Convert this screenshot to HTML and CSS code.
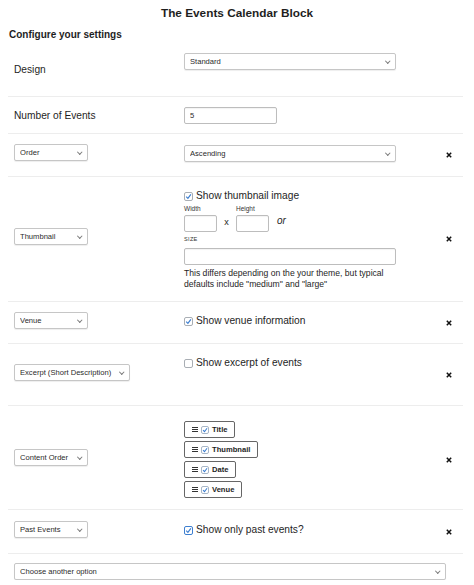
FILE: index.html
```html
<!DOCTYPE html>
<html lang="en">

<head>
    <meta charset="UTF-8">
    <meta name="viewport" content="width=device-width, initial-scale=1.0">
    <title>The Events Calendar Block</title>
    <link rel="stylesheet" href="styles.css">
</head>

<body>
    <div class="block">
        <h1>The Events Calendar Block</h1>
        <h2>Configure your settings</h2>

        <!-- Design -->
        <div class="row row-design">
            <div class="label">Design</div>
            <div class="field">
                <div class="select select-wide">
                    <select>
                        <option>Standard</option>
                    </select>
                </div>
            </div>
            <div></div>
        </div>

        <!-- Number of events -->
        <div class="row row-number">
            <div class="label">Number of Events</div>
            <div class="field">
                <input class="text-input input-number" type="text" value="5">
            </div>
            <div></div>
        </div>

        <!-- Order -->
        <div class="row row-order">
            <div class="label">
                <div class="select">
                    <select>
                        <option>Order</option>
                    </select>
                </div>
            </div>
            <div class="field">
                <div class="select select-wide">
                    <select>
                        <option>Ascending</option>
                    </select>
                </div>
            </div>
            <button class="remove" type="button">
                <svg viewBox="0 0 6 6"><path d="M0.8 0.8 L5.2 5.2 M5.2 0.8 L0.8 5.2" /></svg>
            </button>
        </div>

        <!-- Thumbnail -->
        <div class="row">
            <div class="label">
                <div class="select">
                    <select>
                        <option>Thumbnail</option>
                    </select>
                </div>
            </div>
            <div class="field">
                <label class="check">
                    <span class="box">
                        <svg viewBox="0 0 7 7"><path d="M1.2 3.7 L2.9 5.4 L5.9 1.4" /></svg>
                    </span>
                    Show thumbnail image
                </label>
                <div class="dims">
                    <div class="dim">
                        <span>Width</span>
                        <input class="text-input input-dim" type="text">
                    </div>
                    <span class="times">x</span>
                    <div class="dim">
                        <span>Height</span>
                        <input class="text-input input-dim" type="text">
                    </div>
                    <span class="or">or</span>
                </div>
                <div class="size-label">Size</div>
                <input class="text-input input-size" type="text">
                <p class="help">This differs depending on the your theme, but typical defaults include "medium" and "large"</p>
            </div>
            <button class="remove" type="button">
                <svg viewBox="0 0 6 6"><path d="M0.8 0.8 L5.2 5.2 M5.2 0.8 L0.8 5.2" /></svg>
            </button>
        </div>

        <!-- Venue -->
        <div class="row">
            <div class="label">
                <div class="select">
                    <select>
                        <option>Venue</option>
                    </select>
                </div>
            </div>
            <div class="field">
                <label class="check">
                    <span class="box">
                        <svg viewBox="0 0 7 7"><path d="M1.2 3.7 L2.9 5.4 L5.9 1.4" /></svg>
                    </span>
                    Show venue information
                </label>
            </div>
            <button class="remove" type="button">
                <svg viewBox="0 0 6 6"><path d="M0.8 0.8 L5.2 5.2 M5.2 0.8 L0.8 5.2" /></svg>
            </button>
        </div>

        <!-- Excerpt -->
        <div class="row row-tall">
            <div class="label">
                <div class="select">
                    <select>
                        <option>Excerpt (Short Description)</option>
                    </select>
                </div>
            </div>
            <div class="field">
                <label class="check">
                    <span class="box"></span>
                    Show excerpt of events
                </label>
            </div>
            <button class="remove" type="button">
                <svg viewBox="0 0 6 6"><path d="M0.8 0.8 L5.2 5.2 M5.2 0.8 L0.8 5.2" /></svg>
            </button>
        </div>

        <!-- Content order (draggable list) -->
        <div class="row row-list">
            <div class="label">
                <div class="select">
                    <select>
                        <option>Content Order</option>
                    </select>
                </div>
            </div>
            <div class="field">
                <div class="order-list">
                    <div class="order-item">
                        <svg class="grip" viewBox="0 0 6 5"><path d="M0 0.5 H6 M0 2.5 H6 M0 4.5 H6" /></svg>
                        <span class="box box-small">
                            <svg viewBox="0 0 7 7"><path d="M1.2 3.7 L2.9 5.4 L5.9 1.4" /></svg>
                        </span>
                        Title
                    </div>
                    <div class="order-item">
                        <svg class="grip" viewBox="0 0 6 5"><path d="M0 0.5 H6 M0 2.5 H6 M0 4.5 H6" /></svg>
                        <span class="box box-small">
                            <svg viewBox="0 0 7 7"><path d="M1.2 3.7 L2.9 5.4 L5.9 1.4" /></svg>
                        </span>
                        Thumbnail
                    </div>
                    <div class="order-item">
                        <svg class="grip" viewBox="0 0 6 5"><path d="M0 0.5 H6 M0 2.5 H6 M0 4.5 H6" /></svg>
                        <span class="box box-small">
                            <svg viewBox="0 0 7 7"><path d="M1.2 3.7 L2.9 5.4 L5.9 1.4" /></svg>
                        </span>
                        Date
                    </div>
                    <div class="order-item">
                        <svg class="grip" viewBox="0 0 6 5"><path d="M0 0.5 H6 M0 2.5 H6 M0 4.5 H6" /></svg>
                        <span class="box box-small">
                            <svg viewBox="0 0 7 7"><path d="M1.2 3.7 L2.9 5.4 L5.9 1.4" /></svg>
                        </span>
                        Venue
                    </div>
                </div>
            </div>
            <button class="remove" type="button">
                <svg viewBox="0 0 6 6"><path d="M0.8 0.8 L5.2 5.2 M5.2 0.8 L0.8 5.2" /></svg>
            </button>
        </div>

        <!-- Past events -->
        <div class="row row-past">
            <div class="label">
                <div class="select">
                    <select>
                        <option>Past Events</option>
                    </select>
                </div>
            </div>
            <div class="field">
                <label class="check">
                    <span class="box box-focus">
                        <svg viewBox="0 0 7 7"><path d="M1.2 3.7 L2.9 5.4 L5.9 1.4" /></svg>
                    </span>
                    Show only past events?
                </label>
            </div>
            <button class="remove" type="button">
                <svg viewBox="0 0 6 6"><path d="M0.8 0.8 L5.2 5.2 M5.2 0.8 L0.8 5.2" /></svg>
            </button>
        </div>

        <!-- Add another setting -->
        <div class="add-row">
            <div class="select select-full">
                <select>
                    <option>Choose another option</option>
                </select>
            </div>
        </div>
    </div>
</body>

</html>
```

FILE: styles.css
```css
body {
    margin: 0;
    font-family: 'Liberation Sans', Arial, sans-serif;
    color: #1e1e1e;
    background: #fff;
}

.block {
    padding: 6px 11px 0 8px;
}

.block h1 {
    margin: 0 -3px 0 0;
    font-size: 11.8px;
    line-height: 14px;
    text-align: center;
}

.block h2 {
    margin: 8px 0 0 1px;
    font-size: 10px;
    line-height: 14px;
}

/* Setting rows: label / control / remove button */
.row {
    display: grid;
    grid-template-columns: 170px 1fr 28px;
    align-items: center;
    box-sizing: border-box;
    min-height: 42px;
    padding: 8px 0 8px 6px;
    border-bottom: 1px solid #ededed;
}

.row .field {
    align-self: start;
    padding: 3px 0;
}

.row-design {
    min-height: 55px;
}

.row-number {
    min-height: 37px;
}

.row-number .field {
    align-self: center;
    padding: 0;
}

.row-order {
    min-height: 43px;
}

.row-tall {
    min-height: 62px;
}

.row-list {
    padding-top: 12px;
    padding-bottom: 8px;
}

.row-past {
    min-height: 44px;
}

.row-past .field {
    padding-top: 4px;
}

.label {
    display: flex;
    align-items: center;
    font-size: 10.2px;
}

/* the small selects sit a little above the row's middle */
.label .select {
    margin-bottom: 5px;
}

/* Selects */
.select {
    position: relative;
    display: flex;
    width: fit-content;
}

.select select {
    appearance: none;
    -webkit-appearance: none;
    box-sizing: border-box;
    height: 17px;
    min-width: 74px;
    margin: 0;
    padding: 0 17px 0 5px;
    border: 1px solid #c6c6c6;
    border-radius: 2px;
    background: #fff;
    box-shadow: 0 1px 1px rgba(0, 0, 0, 0.07);
    font-family: inherit;
    font-size: 7.6px;
    color: #2b2b2b;
}

.select::after {
    content: '';
    position: absolute;
    top: 6px;
    right: 7px;
    width: 2.5px;
    height: 2.5px;
    border-right: 1px solid #7a7a7a;
    border-bottom: 1px solid #7a7a7a;
    transform: rotate(45deg);
    pointer-events: none;
}

.select-wide select {
    width: 212px;
}

.select-full {
    width: auto;
}

.select-full select {
    width: 100%;
}

/* Text inputs */
.text-input {
    display: block;
    box-sizing: border-box;
    height: 17px;
    margin: 0;
    padding: 0 5px;
    border: 1px solid #bdbdbd;
    border-radius: 2px;
    box-shadow: inset 0 1px 1px rgba(0, 0, 0, 0.05);
    font-family: inherit;
    font-size: 7.6px;
    color: #2b2b2b;
}

.input-number {
    width: 93px;
}

.input-dim {
    width: 33px;
}

.input-size {
    width: 212px;
    margin-top: 5px;
}

/* Checkboxes */
.check {
    display: flex;
    align-items: center;
    gap: 3px;
    margin-top: 2px;
    font-size: 10.2px;
    line-height: 12px;
}

.box {
    display: flex;
    align-items: center;
    justify-content: center;
    box-sizing: border-box;
    width: 9px;
    height: 9px;
    border: 1px solid #a9aeb4;
    border-radius: 2px;
    background: #fff;
}

.box svg {
    width: 7px;
    height: 7px;
    fill: none;
    stroke: #3d7fd0;
    stroke-width: 1.2;
}

.box-focus {
    border-color: #3d7fd0;
}

.box-small {
    width: 8px;
    height: 8px;
    border-color: #a8b6c6;
}

.box-small svg {
    width: 6px;
    height: 6px;
}

/* Thumbnail dimensions */
.dims {
    display: flex;
    align-items: flex-end;
    margin-top: 2px;
}

.dim {
    display: flex;
    flex-direction: column;
    gap: 2px;
}

.dim span {
    font-size: 6.5px;
    line-height: 9px;
    color: #333;
}

.times {
    width: 19px;
    margin-bottom: 3px;
    font-size: 9px;
    line-height: 14px;
    text-align: center;
}

.or {
    margin: 0 0 4px 8px;
    font-size: 10px;
    font-style: italic;
    line-height: 14px;
}

.size-label {
    margin-top: 3px;
    font-size: 5.6px;
    line-height: 8px;
    letter-spacing: 0.3px;
    text-transform: uppercase;
    color: #333;
}

.help {
    width: 212px;
    margin: 3px 0 0;
    font-size: 8.6px;
    line-height: 11px;
}

/* Content order list */
.order-list {
    display: flex;
    flex-direction: column;
    align-items: flex-start;
    gap: 3px;
}

.order-item {
    display: flex;
    align-items: center;
    box-sizing: border-box;
    height: 17px;
    padding: 0 7px;
    border: 1px solid #666;
    border-radius: 2px;
    font-size: 7.6px;
    font-weight: bold;
}

.grip {
    width: 6px;
    height: 5px;
    margin-right: 3px;
    stroke: #333;
    stroke-width: 1;
}

.order-item .box {
    margin-right: 3px;
}

/* Remove button */
.remove {
    justify-self: center;
    display: flex;
    width: 6px;
    height: 6px;
    padding: 0;
    border: 0;
    background: none;
}

.remove svg {
    width: 6px;
    height: 6px;
    stroke: #111;
    stroke-width: 1.5;
}

.add-row {
    padding: 9px 17px 0 6px;
}
```
